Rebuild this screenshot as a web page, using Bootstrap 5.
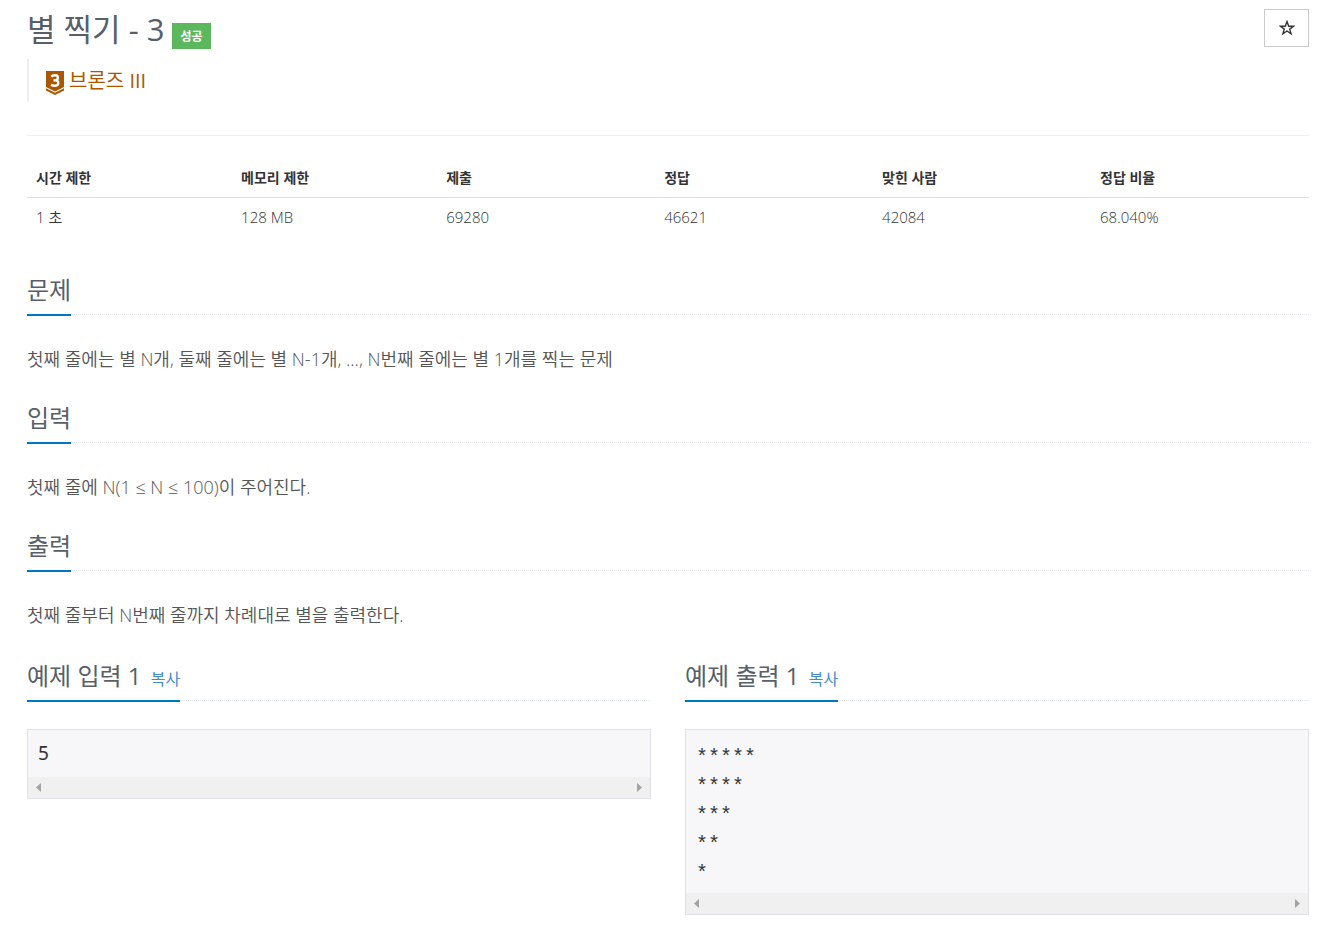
<!DOCTYPE html>
<html lang="ko">
<head>
<meta charset="utf-8">
<meta name="viewport" content="width=device-width, initial-scale=1">
<title>별 찍기 - 3</title>
<link href="https://cdn.jsdelivr.net/npm/bootstrap@5.3.0/dist/css/bootstrap.min.css" rel="stylesheet">
<style>
  body { font-family: "Open Sans", "Noto Sans CJK KR", sans-serif; font-size: 15px; color: #333; }
  .page { padding: 9px 15px 0 27px; }
  .page h1, .page h2 { color: #585f69; font-weight: 400; margin: 0; }
  .page h1 { font-size: 31px; line-height: 40px; }
  .label-ok { background: #5cb85c; color: #fff; font-size: 12px; font-weight: 700; line-height: 24px; padding: 2px 8px 0; margin-top: 14px; }
  .star-btn { width: 45px; height: 38px; border: 1px solid #ccc; border-radius: 0; padding: 0 0 1px; background: #fff; }
  .tier { border-left: 2px solid #eee; height: 43px; margin: 10px 0 33px; padding-left: 17px; font-size: 20px; font-weight: 400; color: #ad5600; }
  .tier svg { margin-right: 5px; }
  .rule { border-top: 1px solid #eee; }
  .info { table-layout: fixed; margin: 21px 0 0; color: #333; }
  .info th, .info td { background: none; padding: 0 9px; line-height: 39px; height: 39px; border: 0; font-weight: 350; }
  .info th { font-size: 14px; font-weight: 700; border-bottom: 1px solid #ddd; height: 40px; }
  .info col { width: 17%; }
  .info .narrow { width: 16%; }
  .headline { border-bottom: 1px dotted #e4e9f0; margin-bottom: 28px; }
  .page .headline h2 { display: inline-block; font-size: 24px; line-height: 34px; padding-bottom: 7px; margin-bottom: -2px; border-bottom: 2px solid #0078c1; vertical-align: bottom; }
  .page section { padding-top: 36px; }
  .page section + section { padding-top: 26px; }
  .page section p { font-size: 18px; line-height: 32px; font-weight: 350; color: #555; margin: 0; }
  .copy { font-size: 16px; line-height: 1; color: #428bca; text-decoration: none; margin-left: 3px; }
  .samples { column-gap: 34px; padding-top: 28px; }
  .sample { flex: 1 1 0; min-width: 0; }
  .sample-box { background: #f7f7f9; border: 1px solid #e1e1e8; }
  .sample-box pre { font-family: "Liberation Mono", monospace; font-size: 20px; line-height: 29px; color: #333; margin: 0; padding: 13px 10px 5px; }
  .sample-box .num { font-family: "Noto Sans", sans-serif; font-size: 19px; padding: 9px 10px; }
  .track { background: #f0f0f0; height: 21px; padding: 0 8px; }
</style>
</head>
<body>
<main class="page container-fluid">
  <header class="d-flex justify-content-between align-items-start">
    <div class="d-flex align-items-start gap-2">
      <h1>별 찍기 - 3</h1>
      <span class="label-ok">성공</span>
    </div>
    <button class="btn star-btn d-flex align-items-center justify-content-center" type="button" aria-label="즐겨찾기">
      <svg width="16" height="16" viewBox="0 0 16 16" fill="none" stroke="#333" stroke-width="1.4"><path d="M8 1.5 9.7 6.2H14.6L10.7 9.1 12.1 13.8 8 11 3.900 13.800 5.300 9.100 1.400 6.200H6.300Z"/></svg>
    </button>
  </header>
  <div class="tier d-flex align-items-center">
    <svg class="mt-1" width="18" height="24" viewBox="0 0 18 24"><path fill="#ad5600" d="M0 0H18V16L9 20.500 0 16ZM0 17.300 9 21.700 18 17.300V19.400L9 24 0 19.400Z"/><path fill="none" stroke="#fff" stroke-width="2.400" d="M5.300 5.600C6.500 4.400 8 4.100 9.300 4.200 12.900 4.500 12.500 8.800 9.500 9.200H7.500 9.500C13.300 9.500 13.200 14.300 9.300 14.700 7.600 14.800 6 14.400 5 13.700"/></svg>
    <span>브론즈 III</span>
  </div>
  <div class="rule"></div>
  <table class="table info">
    <colgroup><col class="narrow"><col class="narrow"><col><col><col><col></colgroup>
    <thead><tr><th>시간 제한</th><th>메모리 제한</th><th>제출</th><th>정답</th><th>맞힌 사람</th><th>정답 비율</th></tr></thead>
    <tbody><tr><td>1 초</td><td>128 MB</td><td>69280</td><td>46621</td><td>42084</td><td>68.040%</td></tr></tbody>
  </table>
  <section>
    <div class="headline"><h2>문제</h2></div>
    <p>첫째 줄에는 별 N개, 둘째 줄에는 별 N-1개, ..., N번째 줄에는 별 1개를 찍는 문제</p>
  </section>
  <section>
    <div class="headline"><h2>입력</h2></div>
    <p>첫째 줄에 N(1 ≤ N ≤ 100)이 주어진다.</p>
  </section>
  <section>
    <div class="headline"><h2>출력</h2></div>
    <p>첫째 줄부터 N번째 줄까지 차례대로 별을 출력한다.</p>
  </section>
  <div class="samples d-flex align-items-start">
    <div class="sample">
      <div class="headline"><h2>예제 입력 1 <a class="copy" href="#">복사</a></h2></div>
      <div class="sample-box">
        <pre class="num">5</pre>
        <div class="track d-flex align-items-center justify-content-between">
          <svg width="5" height="9" viewBox="0 0 5 9"><path fill="#a3a3a3" d="M5 0V9L0 4.500Z"/></svg>
          <svg width="5" height="9" viewBox="0 0 5 9"><path fill="#a3a3a3" d="M0 0V9L5 4.500Z"/></svg>
        </div>
      </div>
    </div>
    <div class="sample">
      <div class="headline"><h2>예제 출력 1 <a class="copy" href="#">복사</a></h2></div>
      <div class="sample-box">
        <pre>*****
****
***
**
*</pre>
        <div class="track d-flex align-items-center justify-content-between">
          <svg width="5" height="9" viewBox="0 0 5 9"><path fill="#a3a3a3" d="M5 0V9L0 4.500Z"/></svg>
          <svg width="5" height="9" viewBox="0 0 5 9"><path fill="#a3a3a3" d="M0 0V9L5 4.500Z"/></svg>
        </div>
      </div>
    </div>
  </div>
</main>
<script src="https://cdn.jsdelivr.net/npm/bootstrap@5.3.0/dist/js/bootstrap.bundle.min.js"></script>
</body>
</html>
